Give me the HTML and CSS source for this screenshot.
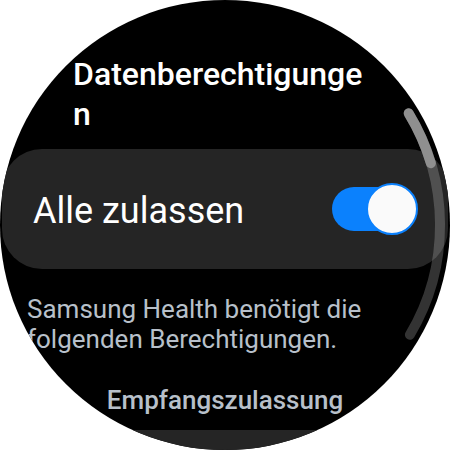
FILE: index.html
```html
<!DOCTYPE html>
<html lang="de">
<head>
<meta charset="utf-8">
<link rel="stylesheet" href="styles.css">
</head>
<body>
<div class="watch">
  <h1 class="title">Datenberechtigungen</h1>
  <div class="card">
    <span class="card-label">Alle zulassen</span>
    <div class="toggle">
      <div class="toggle-track"></div>
      <div class="toggle-thumb"></div>
    </div>
  </div>
  <p class="desc">Samsung Health benötigt die folgenden Berechtigungen.</p>
  <h2 class="section">Empfangszulassung</h2>
  <div class="card card-next"></div>
  <svg class="scrollbar" width="450" height="450" viewBox="0 0 450 450">
    <path d="M408.7 113.3 A215 215 0 0 1 409.9 334.8" fill="none" stroke="rgba(255,255,255,0.2)" stroke-width="10" stroke-linecap="round"/>
    <path d="M408.7 113.3 A215 215 0 0 1 430.9 163.2" fill="none" stroke="#8f8f8f" stroke-width="10" stroke-linecap="round"/>
  </svg>
</div>
</body>
</html>
```

FILE: styles.css
```css
html, body {
  margin: 0;
  padding: 0;
  background: #ffffff;
}

.watch {
  position: relative;
  width: 450px;
  height: 450px;
  border-radius: 50%;
  background: #000000;
  overflow: hidden;
  display: flex;
  flex-direction: column;
  font-family: Roboto, "Noto Sans", sans-serif;
}

.title {
  margin: 54px 0 0 73px;
  width: 296px;
  font-size: 32px;
  font-weight: 500;
  line-height: 40px;
  color: #ffffff;
  overflow-wrap: anywhere;
  word-break: break-all;
}

.card {
  margin: 15px 2px 0 2px;
  height: 120px;
  flex: 0 0 120px;
  border-radius: 40px;
  background: #252525;
  display: flex;
  align-items: center;
  justify-content: space-between;
  padding: 0 30px 0 31px;
}

.card-label {
  font-size: 36px;
  font-weight: 400;
  color: #ffffff;
  padding-top: 3px;
}

.toggle {
  position: relative;
  width: 86px;
  height: 52px;
}

.toggle-track {
  position: absolute;
  left: 0;
  top: 4px;
  width: 80px;
  height: 44px;
  border-radius: 22px;
  background: #0b81fd;
}

.toggle-thumb {
  position: absolute;
  right: 0;
  top: 0;
  width: 48px;
  height: 48px;
  border-radius: 50%;
  border: 2px solid #0b81fd;
  background: #fafafa;
}

.desc {
  margin: 25px 0 0 27px;
  width: 350px;
  font-size: 26px;
  line-height: 30px;
  color: #b8c0ca;
}

.section {
  margin: 31px 0 0 0;
  text-align: center;
  font-size: 26px;
  font-weight: 500;
  line-height: 30px;
  color: #b8c0ca;
}

.card-next {
  margin-top: 15px;
}

.scrollbar {
  position: absolute;
  left: 0;
  top: 0;
}
```
